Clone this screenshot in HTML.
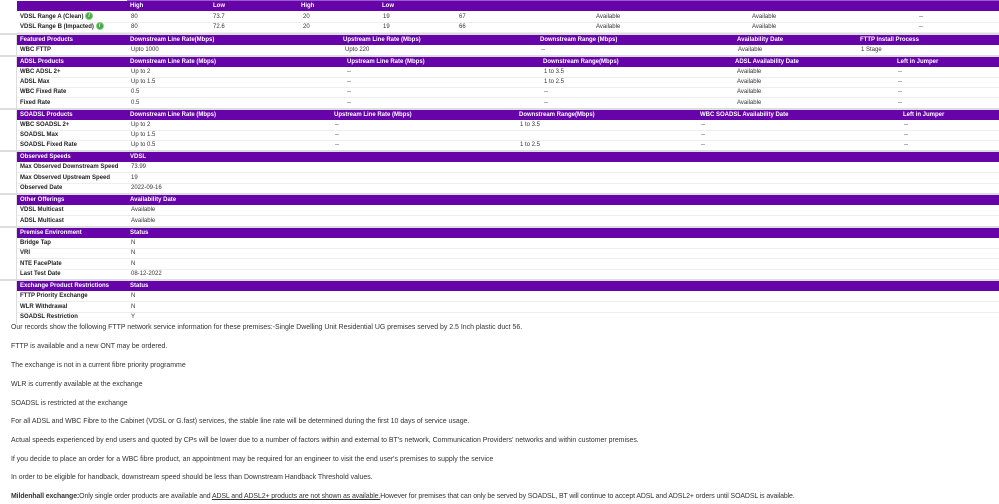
<!DOCTYPE html>
<html><head><meta charset="utf-8"><style>
body{margin:0;width:999px;height:504px;background:#fff;position:relative;overflow:hidden;font-family:"Liberation Sans",sans-serif;}
.g{position:absolute;left:0;width:999px;border-top:2px solid #ddd;}
.g:before{content:"";position:absolute;left:16px;top:0;bottom:0;border-left:1px solid #ddd;}
.r{position:absolute;left:17px;right:0;height:10px;font-size:6px;line-height:10px;color:#333;border-bottom:1px solid #eee;}
.r span{position:absolute;white-space:nowrap;}
.h{background:#6604aa;color:#fff;font-weight:bold;border:none;}
.l{font-weight:bold;color:#222;}
.p{position:absolute;left:11px;font-size:6.95px;color:#333;white-space:nowrap;}
.i{display:inline-block;width:6px;height:6px;border-radius:50%;background:#4a4;color:#fff;font-size:5px;line-height:6px;text-align:center;vertical-align:middle;border:1px solid #8c8}
</style></head><body>
<div style="position:absolute;left:127px;top:0;width:872px;height:2px;background:#9a5ccf"></div>
<div class="r h" style="top:1px"><span style="left:113px">High</span><span style="left:196px">Low</span><span style="left:284px">High</span><span style="left:365px">Low</span></div>
<div class="r" style="top:12px"><span class="l" style="left:3px">VDSL Range A (Clean) <i class="i">i</i></span><span style="left:114px">80</span><span style="left:196px">73.7</span><span style="left:286px">20</span><span style="left:366px">19</span><span style="left:442px">67</span><span style="left:579px">Available</span><span style="left:735px">Available</span><span style="left:902px">--</span></div>
<div class="r" style="top:22px"><span class="l" style="left:3px">VDSL Range B (Impacted) <i class="i">i</i></span><span style="left:114px">80</span><span style="left:196px">72.6</span><span style="left:286px">20</span><span style="left:366px">19</span><span style="left:442px">66</span><span style="left:579px">Available</span><span style="left:735px">Available</span><span style="left:902px">--</span></div>

<div class="g" style="top:33px;height:22px"></div>
<div class="r h" style="top:35px"><span style="left:3px">Featured Products</span><span style="left:113px">Downstream Line Rate(Mbps)</span><span style="left:326px">Upstream Line Rate (Mbps)</span><span style="left:523px">Downstream Range (Mbps)</span><span style="left:720px">Availability Date</span><span style="left:843px">FTTP Install Process</span></div>
<div class="r" style="top:45px"><span class="l" style="left:3px">WBC FTTP</span><span style="left:114px">Upto 1000</span><span style="left:328px">Upto 220</span><span style="left:524px">--</span><span style="left:721px">Available</span><span style="left:844px">1 Stage</span></div>

<div class="g" style="top:55px;height:53px"></div>
<div class="r h" style="top:57px"><span style="left:3px">ADSL Products</span><span style="left:113px">Downstream Line Rate (Mbps)</span><span style="left:330px">Upstream Line Rate (Mbps)</span><span style="left:526px">Downstream Range(Mbps)</span><span style="left:718px">ADSL Availability Date</span><span style="left:880px">Left in Jumper</span></div>
<div class="r" style="top:67px"><span class="l" style="left:3px">WBC ADSL 2+</span><span style="left:114px">Up to 2</span><span style="left:330px">--</span><span style="left:527px">1 to 3.5</span><span style="left:720px">Available</span><span style="left:881px">--</span></div>
<div class="r" style="top:77px"><span class="l" style="left:3px">ADSL Max</span><span style="left:114px">Up to 1.5</span><span style="left:330px">--</span><span style="left:527px">1 to 2.5</span><span style="left:720px">Available</span><span style="left:881px">--</span></div>
<div class="r" style="top:87px"><span class="l" style="left:3px">WBC Fixed Rate</span><span style="left:114px">0.5</span><span style="left:330px">--</span><span style="left:527px">--</span><span style="left:720px">Available</span><span style="left:881px">--</span></div>
<div class="r" style="top:98px"><span class="l" style="left:3px">Fixed Rate</span><span style="left:114px">0.5</span><span style="left:330px">--</span><span style="left:527px">--</span><span style="left:720px">Available</span><span style="left:881px">--</span></div>

<div class="g" style="top:108px;height:42px"></div>
<div class="r h" style="top:110px"><span style="left:3px">SOADSL Products</span><span style="left:113px">Downstream Line Rate (Mbps)</span><span style="left:317px">Upstream Line Rate (Mbps)</span><span style="left:502px">Downstream Range(Mbps)</span><span style="left:683px">WBC SOADSL Availability Date</span><span style="left:886px">Left in Jumper</span></div>
<div class="r" style="top:120px"><span class="l" style="left:3px">WBC SOADSL 2+</span><span style="left:114px">Up to 2</span><span style="left:318px">--</span><span style="left:503px">1 to 3.5</span><span style="left:684px">--</span><span style="left:887px">--</span></div>
<div class="r" style="top:130px"><span class="l" style="left:3px">SOADSL Max</span><span style="left:114px">Up to 1.5</span><span style="left:318px">--</span><span style="left:684px">--</span><span style="left:887px">--</span></div>
<div class="r" style="top:140px"><span class="l" style="left:3px">SOADSL Fixed Rate</span><span style="left:114px">Up to 0.5</span><span style="left:318px">--</span><span style="left:503px">1 to 2.5</span><span style="left:684px">--</span><span style="left:887px">--</span></div>

<div class="g" style="top:150px;height:43px"></div>
<div class="r h" style="top:152px"><span style="left:3px">Observed Speeds</span><span style="left:113px">VDSL</span></div>
<div class="r" style="top:162px"><span class="l" style="left:3px">Max Observed Downstream Speed</span><span style="left:114px">73.99</span></div>
<div class="r" style="top:173px"><span class="l" style="left:3px">Max Observed Upstream Speed</span><span style="left:114px">19</span></div>
<div class="r" style="top:183px"><span class="l" style="left:3px">Observed Date</span><span style="left:114px">2022-09-16</span></div>

<div class="g" style="top:193px;height:33px"></div>
<div class="r h" style="top:195px"><span style="left:3px">Other Offerings</span><span style="left:113px">Availability Date</span></div>
<div class="r" style="top:205px"><span class="l" style="left:3px">VDSL Multicast</span><span style="left:114px">Available</span></div>
<div class="r" style="top:216px"><span class="l" style="left:3px">ADSL Multicast</span><span style="left:114px">Available</span></div>

<div class="g" style="top:226px;height:53px"></div>
<div class="r h" style="top:228px"><span style="left:3px">Premise Environment</span><span style="left:113px">Status</span></div>
<div class="r" style="top:238px"><span class="l" style="left:3px">Bridge Tap</span><span style="left:114px">N</span></div>
<div class="r" style="top:248px"><span class="l" style="left:3px">VRI</span><span style="left:114px">N</span></div>
<div class="r" style="top:259px"><span class="l" style="left:3px">NTE FacePlate</span><span style="left:114px">N</span></div>
<div class="r" style="top:269px"><span class="l" style="left:3px">Last Test Date</span><span style="left:114px">08-12-2022</span></div>

<div class="g" style="top:279px;height:43px"></div>
<div class="r h" style="top:281px"><span style="left:3px">Exchange Product Restrictions</span><span style="left:113px">Status</span></div>
<div class="r" style="top:291px"><span class="l" style="left:3px">FTTP Priority Exchange</span><span style="left:114px">N</span></div>
<div class="r" style="top:302px"><span class="l" style="left:3px">WLR Withdrawal</span><span style="left:114px">N</span></div>
<div class="r" style="top:312px;border:none"><span class="l" style="left:3px">SOADSL Restriction</span><span style="left:114px">Y</span></div>

<div class="p" style="top:324px">Our records show the following FTTP network service information for these premises:-Single Dwelling Unit Residential UG premises served by 2.5 Inch plastic duct 56.</div>
<div class="p" style="top:343px">FTTP is available and a new ONT may be ordered.</div>
<div class="p" style="top:362px">The exchange is not in a current fibre priority programme</div>
<div class="p" style="top:381px">WLR is currently available at the exchange</div>
<div class="p" style="top:400px">SOADSL is restricted at the exchange</div>
<div class="p" style="top:418px">For all ADSL and WBC Fibre to the Cabinet (VDSL or G.fast) services, the stable line rate will be determined during the first 10 days of service usage.</div>
<div class="p" style="top:437px">Actual speeds experienced by end users and quoted by CPs will be lower due to a number of factors within and external to BT's network, Communication Providers' networks and within customer premises.</div>
<div class="p" style="top:456px">If you decide to place an order for a WBC fibre product, an appointment may be required for an engineer to visit the end user's premises to supply the service</div>
<div class="p" style="top:474px">In order to be eligible for handback, downstream speed should be less than Downstream Handback Threshold values.</div>
<div class="p" style="top:493px;letter-spacing:-0.1px"><b>Mildenhall exchange:</b>Only single order products are available and <u>ADSL and ADSL2+ products are not shown as available.</u>However for premises that can only be served by SOADSL, BT will continue to accept ADSL and ADSL2+ orders until SOADSL is available.</div>
</body></html>
